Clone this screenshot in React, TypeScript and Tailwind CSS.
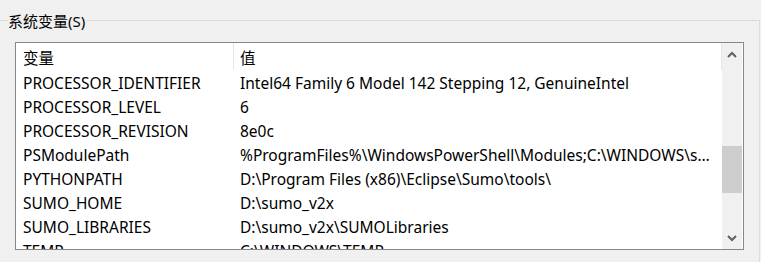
const rows: [string, string][] = [
  ['PROCESSOR_IDENTIFIER', 'Intel64 Family 6 Model 142 Stepping 12, GenuineIntel'],
  ['PROCESSOR_LEVEL', '6'],
  ['PROCESSOR_REVISION', '8e0c'],
  ['PSModulePath', '%ProgramFiles%\\WindowsPowerShell\\Modules;C:\\WINDOWS\\system32\\WindowsPowerShell\\v1.0\\Modules'],
  ['PYTHONPATH', 'D:\\Program Files (x86)\\Eclipse\\Sumo\\tools\\'],
  ['SUMO_HOME', 'D:\\sumo_v2x'],
  ['SUMO_LIBRARIES', 'D:\\sumo_v2x\\SUMOLibraries'],
  ['TEMP', 'C:\\WINDOWS\\TEMP'],
]

const font = { fontFamily: '"Noto Sans", "Noto Sans CJK SC", sans-serif' }

function Chevron({ down }: { down?: boolean }) {
  return (
    <svg width="10" height="7" viewBox="0 0 10 7" className={down ? 'rotate-180' : ''}>
      <path d="M1 6 L5 2 L9 6" fill="none" stroke="#606060" strokeWidth="2" />
    </svg>
  )
}

export default function App() {
  return (
    <div
      className="h-[262px] w-[761px] overflow-hidden bg-[#f0f0f0] pt-[20px] text-[15px] text-black"
      style={font}
    >
      <div className="relative mr-[1px] h-[300px] border-t border-r border-[#dcdcdc]">
        <span className="absolute -top-[11px] left-[8px] bg-[#f0f0f0] pr-[2px] leading-[22px]">系统变量(S)</span>

        <div className="ml-[15px] mt-[21px] flex h-[208px] w-[729px] border border-[#828790] bg-white pr-[1px] text-[15.5px]">
          <div className="flex min-w-0 flex-1 flex-col overflow-hidden">
            <div className="flex h-[27px] shrink-0">
              <div className="h-full w-[218px] shrink-0 border-r border-[#e5e5e5] pl-[7px] pt-[2px] leading-[27px]">变量</div>
              <div className="h-full flex-1 border-r border-[#e5e5e5] pl-[6px] pt-[2px] leading-[27px]">值</div>
            </div>
            {rows.map(([name, value]) => (
              <div key={name} className="flex h-[24px] shrink-0 items-center whitespace-nowrap pt-[4px]">
                <div className="w-[218px] shrink-0 pl-[7px]">{name}</div>
                <div className="w-[480px] truncate pl-[6px]">{value}</div>
              </div>
            ))}
          </div>
          <div className="flex w-[20px] shrink-0 flex-col bg-[#f0f0f0]">
            <div className="flex h-[22px] items-center justify-center">
              <Chevron />
            </div>
            <div className="flex-1">
              <div className="mt-[81px] h-[47px] bg-[#cdcdcd]" />
            </div>
            <div className="flex h-[22px] items-center justify-center">
              <Chevron down />
            </div>
          </div>
        </div>
      </div>
    </div>
  )
}
